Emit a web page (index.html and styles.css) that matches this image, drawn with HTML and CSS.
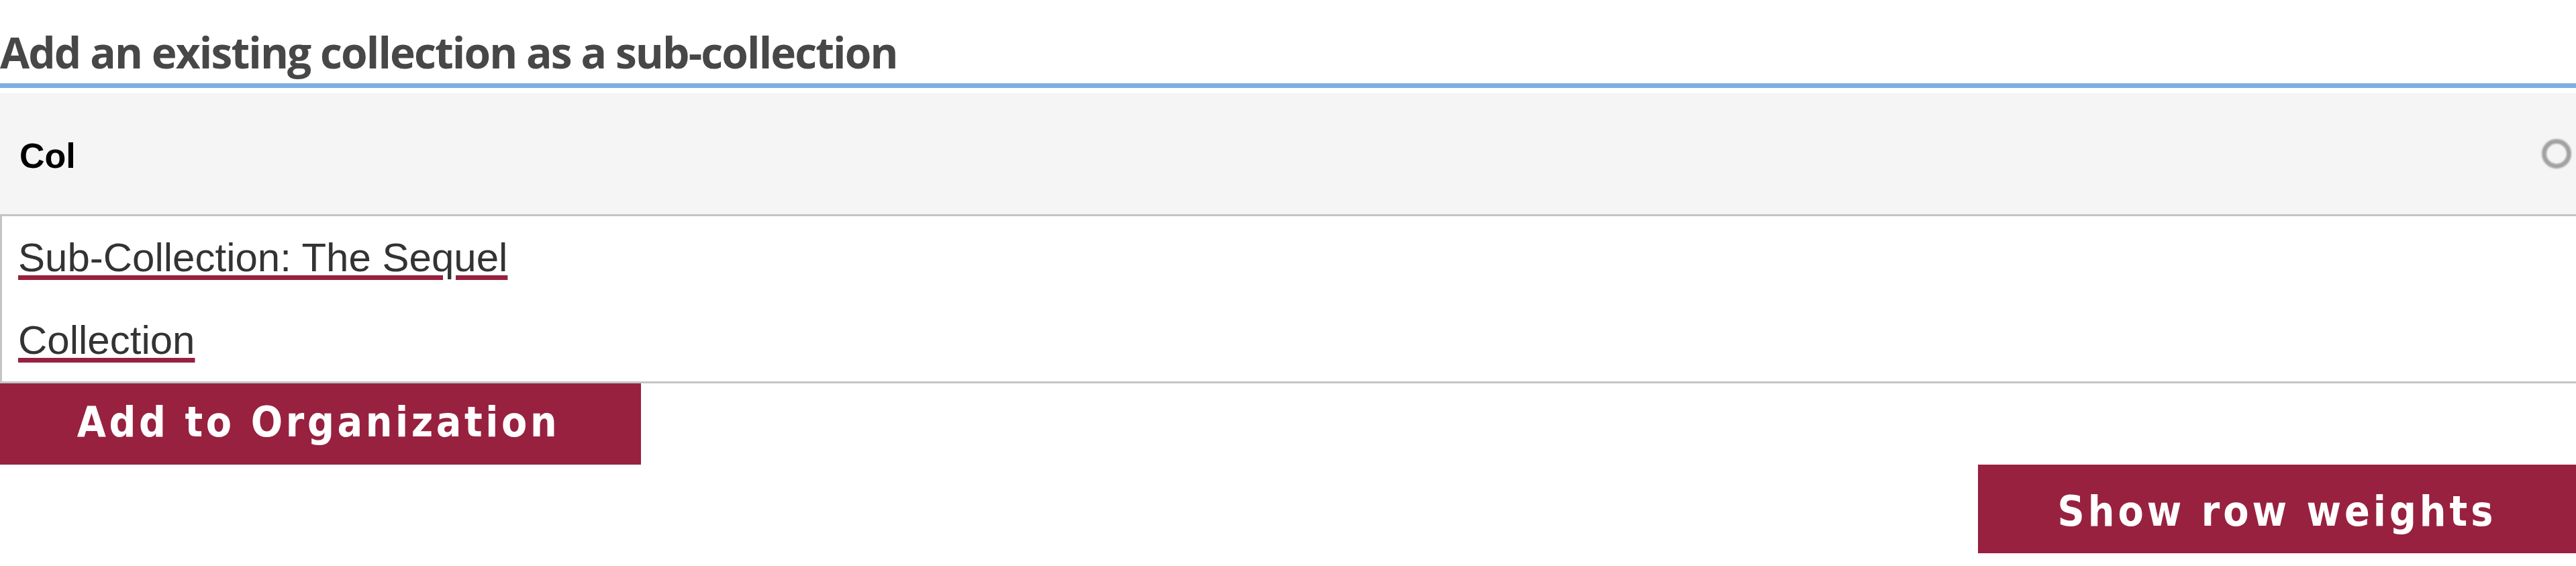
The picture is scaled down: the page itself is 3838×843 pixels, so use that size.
FILE: index.html
```html
<!DOCTYPE html>
<html lang="en">
<head>
<meta charset="utf-8">
<title>Add sub-collection</title>
<link rel="stylesheet" href="styles.css">
</head>
<body>
  <h2 class="section-title">Add an existing collection as a sub-collection</h2>
  <div class="picker">
    <div class="picker-head">
      <span class="picker-label">Col</span>
      <span class="radio"></span>
    </div>
    <ul class="picker-list">
      <li class="picker-item"><a class="picker-link" href="#">Sub-Collection: The Sequel</a></li>
      <li class="picker-item"><a class="picker-link" href="#">Collection</a></li>
    </ul>
  </div>
  <button class="btn btn-add" type="button">Add to Organization</button>
  <div class="weights-row">
    <button class="btn btn-weights" type="button">Show row weights</button>
  </div>
</body>
</html>
```

FILE: styles.css
```css
html, body {
  margin: 0;
  padding: 0;
  background: #ffffff;
}

body {
  font-family: "Liberation Sans", Arial, sans-serif;
  overflow: hidden;
}

.section-title {
  margin: 0;
  padding-top: 32px;
  line-height: 92px;
  font-family: "Open Sans", sans-serif;
  font-weight: 700;
  font-size: 64px;
  letter-spacing: -1.9px;
  color: #474747;
  border-bottom: 7px solid #7dade2;
  white-space: nowrap;
}

.picker {
  margin-top: 8px;
}

.picker-head {
  height: 180px;
  background: #f5f5f6;
  display: flex;
  align-items: center;
  justify-content: space-between;
  padding: 0 7px 0 29px;
}

.picker-label {
  font-family: "Liberation Sans", Arial, sans-serif;
  font-weight: 700;
  font-size: 52px;
  color: #000000;
  padding-top: 6px;
}

.radio {
  width: 30px;
  height: 30px;
  border: 7px solid #a2a2a2;
  border-radius: 50%;
  filter: blur(1px);
}

.picker-list {
  list-style: none;
  margin: 0;
  padding: 0;
  border: 3px solid #c4c4c4;
  border-right: 0;
  background: #ffffff;
}

.picker-item {
  padding: 32px 0 31px 24px;
  font-size: 60px;
  line-height: 60px;
}

.picker-link {
  color: #333333;
  text-decoration: underline;
  text-decoration-color: #98213f;
  text-decoration-thickness: 7px;
  text-underline-offset: 6px;
}

.btn {
  border: 0;
  margin: 0;
  background: #98213f;
  color: #ffffff;
  font-family: "DejaVu Sans Condensed", "DejaVu Sans", sans-serif;
  font-stretch: condensed;
  font-weight: 700;
  font-size: 62px;
  letter-spacing: 5px;
  white-space: nowrap;
  cursor: pointer;
}

.btn-add {
  display: block;
  width: 955px;
  height: 121px;
  padding: 0 6px 6px 0;
  line-height: 115px;
  text-align: center;
  letter-spacing: 4.6px;
}

.weights-row {
  display: flex;
  justify-content: flex-end;
}

.btn-weights {
  width: 891px;
  height: 132px;
  padding: 15px 0 7px 0;
  line-height: 110px;
  text-align: center;
}
```
